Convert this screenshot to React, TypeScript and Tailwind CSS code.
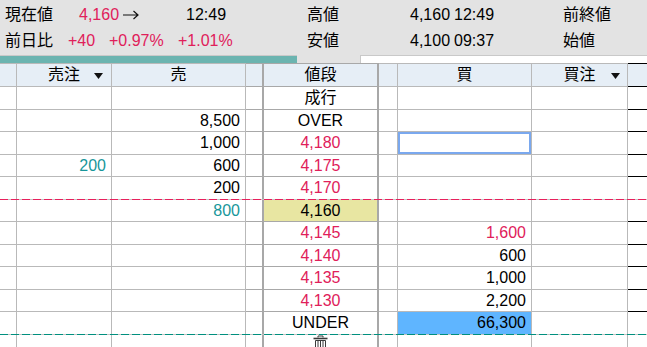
import React from "react";

const FONT = { fontFamily: '"Liberation Sans", "Noto Sans CJK JP", sans-serif' };

// width + right border of each column
const COLS = [
  "w-[17px] border-r border-[#b9b9b9]",
  "w-[95px] border-r border-[#b9b9b9]",
  "w-[134px] border-r border-[#b9b9b9]",
  "w-[18px] border-r-2 border-[#a8a8a8]",
  "w-[115px] border-r-2 border-[#a8a8a8]",
  "w-[19px] border-r border-[#b9b9b9]",
  "w-[134px] border-r border-[#b9b9b9]",
  "w-[96px] border-r border-[#b9b9b9]",
  "flex-1",
];

// body alignment
const ALIGN = [
  "",
  "justify-end pr-[5px]",
  "justify-end pr-[5px]",
  "",
  "justify-center",
  "",
  "justify-end pr-[5px]",
  "justify-end pr-[5px]",
  "",
];

const RED = "text-[#e0205a]";
const TEAL = "text-[#17969a]";

type Row = {
  h: string;
  sellOrd?: string;
  sell?: string;
  sellTeal?: boolean;
  price?: string;
  red?: boolean;
  current?: boolean;
  buy?: string;
  buyRed?: boolean;
  focus?: boolean;
  blue?: boolean;
  sep?: "red" | "teal";
};

const rows: Row[] = [
  { h: "h-[23px]", price: "成行" },
  { h: "h-[22px]", sell: "8,500", price: "OVER" },
  { h: "h-[23px]", sell: "1,000", price: "4,180", red: true, focus: true },
  { h: "h-[22px]", sellOrd: "200", sell: "600", price: "4,175", red: true },
  { h: "h-[22px]", sell: "200", price: "4,170", red: true, sep: "red" },
  { h: "h-[22px]", sell: "800", sellTeal: true, price: "4,160", current: true },
  { h: "h-[23px]", price: "4,145", red: true, buy: "1,600", buyRed: true },
  { h: "h-[22px]", price: "4,140", red: true, buy: "600" },
  { h: "h-[23px]", price: "4,135", red: true, buy: "1,000" },
  { h: "h-[22px]", price: "4,130", red: true, buy: "2,200" },
  { h: "h-[22px]", price: "UNDER", buy: "66,300", blue: true, sep: "teal" },
];

function Sep({ color }: { color: "red" | "teal" }) {
  return (
    <div
      className={
        color === "red"
          ? "h-px w-full bg-[linear-gradient(90deg,#e8205c_8px,#c4c4c4_8px)] bg-[length:11px_1px] bg-repeat-x"
          : "h-px w-full bg-[linear-gradient(90deg,#00907f_8px,#c4c4c4_8px)] bg-[length:11px_1px] bg-repeat-x"
      }
    />
  );
}

function BoardRow({ r }: { r: Row }) {
  const bb = r.sep ? "" : "border-b";
  const cell = (i: number, extra = "") =>
    `${COLS[i]} ${ALIGN[i]} ${bb} ${r.h} flex items-center ${extra}`;
  return (
    <>
      <div className="flex">
        <div className={cell(0)} />
        <div className={cell(1, TEAL)}>{r.sellOrd}</div>
        <div className={cell(2, r.sellTeal ? TEAL : "text-black")}>{r.sell}</div>
        <div className={cell(3)} />
        <div className={cell(4, `${r.red ? RED : "text-black"} ${r.current ? "bg-[#e8e6a2]" : ""}`)}>
          {r.price}
        </div>
        <div className={cell(5)} />
        <div
          className={cell(
            6,
            `${r.buyRed ? RED : "text-black"} ${r.blue ? "bg-[#5fb5ff]" : ""} ${
              r.focus ? "shadow-[inset_0_0_0_2px_#7aa8ee]" : ""
            }`
          )}
        >
          {r.buy}
        </div>
        <div className={cell(7)} />
        <div className={cell(8)} />
      </div>
      {r.sep && <Sep color={r.sep} />}
    </>
  );
}

function Caret() {
  return (
    <svg width="9" height="6" viewBox="0 0 9 6">
      <path d="M0 0h9L4.5 6z" fill="#111" />
    </svg>
  );
}

function RightArrow() {
  return (
    <svg width="16" height="10" viewBox="0 0 16 10">
      <path d="M0 5h15M10.5 1l4.5 4-4.5 4" fill="none" stroke="#111" strokeWidth="1.2" />
    </svg>
  );
}

function Trash() {
  return (
    <svg width="15" height="14" viewBox="0 0 15 14">
      <path d="M5 2.5V1h5v1.5" fill="none" stroke="#3a3a3a" strokeWidth="1" />
      <path d="M0.5 3.5h14" stroke="#3a3a3a" strokeWidth="1.6" />
      <path d="M2.5 5.5h10V14h-10z" fill="none" stroke="#3a3a3a" strokeWidth="1" />
      <path d="M5 6v8M7.5 6v8M10 6v8" stroke="#3a3a3a" strokeWidth="1" />
    </svg>
  );
}

export default function App() {
  const head = (i: number, extra = "") =>
    `${COLS[i]} h-[24px] border-t border-b bg-[#e6eef6] flex items-center ${extra}`;
  return (
    <div className="w-[647px] h-[347px] overflow-hidden bg-white text-[16px] leading-none" style={FONT}>
      <div className="bg-[#e3e3e3]">
        <div className="h-[29px] flex items-center pt-[1px] text-black">
          <span className="w-[79px] pl-[5px]">現在値</span>
          <span className="w-[107px] flex items-center">
            <span className={RED}>4,160</span>
            <span className="ml-[4px] flex">
              <RightArrow />
            </span>
          </span>
          <span className="w-[121px]">12:49</span>
          <span className="w-[103px]">高値</span>
          <span className="w-[44px]">4,160</span>
          <span className="w-[109px]">12:49</span>
          <span>前終値</span>
        </div>
        <div className="h-[26px] flex items-center pb-[3px] text-black">
          <span className="w-[68px] pl-[5px]">前日比</span>
          <span className={`w-[41px] ${RED}`}>+40</span>
          <span className={`w-[69px] ${RED}`}>+0.97%</span>
          <span className={`w-[129px] ${RED}`}>+1.01%</span>
          <span className="w-[103px]">安値</span>
          <span className="w-[44px]">4,100</span>
          <span className="w-[109px]">09:37</span>
          <span>始値</span>
        </div>
        <div className="h-[8px] flex">
          <div className="w-[297px] border-t border-[#c9c9c9] bg-[#6bb4b0]" />
          <div className="flex-1" />
          <div className="w-[287px] border-t border-l border-[#c9c9c9] bg-white" />
        </div>
      </div>

      <div className="flex">
        <div className={head(0)} />
        <div className={head(1, "justify-center relative")}>
          <span>売注</span>
          <span className="absolute right-[8px] top-[9px] flex">
            <Caret />
          </span>
        </div>
        <div className={head(2, "justify-center")}>売</div>
        <div className={head(3)} />
        <div className={head(4, "justify-center")}>値段</div>
        <div className={head(5)} />
        <div className={head(6, "justify-center")}>買</div>
        <div className={head(7, "justify-center relative")}>
          <span>買注</span>
          <span className="absolute right-[7px] top-[9px] flex">
            <Caret />
          </span>
        </div>
        <div className={head(8)} />
      </div>

      {rows.map((r, i) => (
        <BoardRow key={i} r={r} />
      ))}

      <div className="flex h-[20px]">
        {COLS.map((c, i) => (
          <div key={i} className={`${c} h-full flex items-start ${i === 4 ? "justify-center" : ""}`}>
            {i === 4 && <Trash />}
          </div>
        ))}
      </div>
    </div>
  );
}
